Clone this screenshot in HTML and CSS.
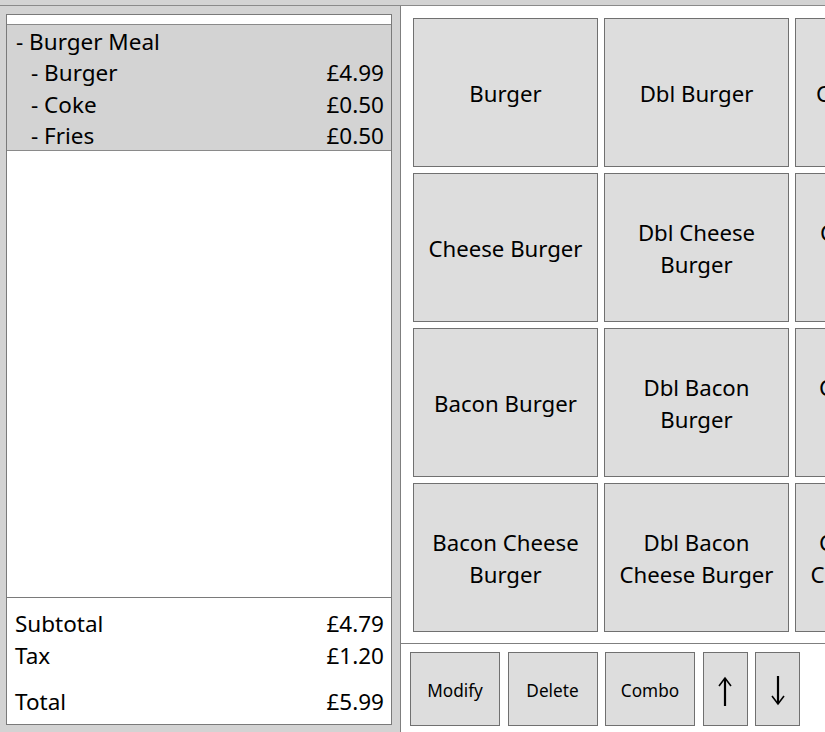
FILE: index.html
```html
<!DOCTYPE html>
<html>
<head>
<meta charset="utf-8">
<link rel="stylesheet" href="styles.css">
</head>
<body>
<div class="topbar"></div>
<div class="main">
  <div class="left">
    <div class="order">
      <div class="items">
        <div class="header-strip"></div>
        <div class="group">
          <div class="row"><span class="name">- Burger Meal</span></div>
          <div class="row sub"><span class="name">- Burger</span><span class="price">£4.99</span></div>
          <div class="row sub"><span class="name">- Coke</span><span class="price">£0.50</span></div>
          <div class="row sub"><span class="name">- Fries</span><span class="price">£0.50</span></div>
        </div>
      </div>
      <div class="totals">
        <div class="trow"><span>Subtotal</span><span>£4.79</span></div>
        <div class="trow"><span>Tax</span><span>£1.20</span></div>
        <div class="trow total"><span>Total</span><span>£5.99</span></div>
      </div>
    </div>
  </div>
  <div class="vsep"></div>
  <div class="right">
    <div class="menu">
      <div class="grid">
        <button class="item">Burger</button>
        <button class="item">Dbl Burger</button>
        <button class="item">Chicken Wrap</button>
        <button class="item">Cheese Burger</button>
        <button class="item">Dbl Cheese<br>Burger</button>
        <button class="item">Chicken Club<br>Burger</button>
        <button class="item">Bacon Burger</button>
        <button class="item">Dbl Bacon<br>Burger</button>
        <button class="item">Chicken Fillet<br>Burger</button>
        <button class="item">Bacon Cheese<br>Burger</button>
        <button class="item">Dbl Bacon<br>Cheese Burger</button>
        <button class="item">Chicken Fillet<br>Cheese Burger</button>
      </div>
    </div>
    <div class="actions">
      <button class="act">Modify</button>
      <button class="act">Delete</button>
      <button class="act">Combo</button>
      <button class="act arrow" aria-label="Move up">
        <svg width="16" height="32" viewBox="0 0 16 32"><path d="M8 3.5V31" stroke="#000" stroke-width="2.2" fill="none"/><path d="M2 11L8 3L14 11" stroke="#000" stroke-width="1.6" fill="none"/></svg>
      </button>
      <button class="act arrow" aria-label="Move down">
        <svg width="16" height="32" viewBox="0 0 16 32"><path d="M8 1V28.5" stroke="#000" stroke-width="2.2" fill="none"/><path d="M2 21L8 29L14 21" stroke="#000" stroke-width="1.6" fill="none"/></svg>
      </button>
    </div>
  </div>
</div>
</body>
</html>
```
FILE: styles.css
```css
* { box-sizing: border-box; }
html, body {
  margin: 0;
  padding: 0;
}
body {
  width: 825px;
  height: 732px;
  overflow: hidden;
  background: #d3d3d3;
  font-family: "Noto Sans", "Open Sans", sans-serif;
  color: #000;
}
.topbar {
  height: 6px;
  border-bottom: 1px solid #8a8a8a;
}
.main {
  display: flex;
  height: 726px;
}
.left {
  width: 400px;
  flex: none;
  padding: 8px 8px 7px 6px;
}
.order {
  width: 386px;
  height: 711px;
  border: 1px solid #7a7a7a;
  background: #fff;
  display: flex;
  flex-direction: column;
}
.items {
  flex: 1;
  border-bottom: 1px solid #7a7a7a;
}
.header-strip {
  height: 9px;
}
.group {
  background: #d3d3d3;
  border-top: 1px solid #8a8a8a;
  border-bottom: 1px solid #8a8a8a;
}
.row {
  display: flex;
  justify-content: space-between;
  height: 31.25px;
  line-height: 33px;
  font-size: 22.5px;
  padding: 0 7px 0 9px;
}
.row.sub {
  padding-left: 24px;
}
.totals {
  height: 126px;
  padding: 10px 7px 0 8px;
}
.trow {
  display: flex;
  justify-content: space-between;
  height: 32px;
  line-height: 32px;
  font-size: 22.5px;
}
.trow.total {
  margin-top: 14px;
}
.vsep {
  width: 1px;
  flex: none;
  background: #7f7f7f;
}
.right {
  flex: 1;
  background: #fff;
  display: flex;
  flex-direction: column;
  overflow: hidden;
}
.menu {
  height: 638px;
  padding: 12px 0 0 12px;
  border-bottom: 1px solid #7f7f7f;
  overflow: hidden;
}
.grid {
  display: grid;
  grid-template-columns: repeat(3, 185px);
  grid-auto-rows: 149px;
  gap: 6px;
}
button {
  font-family: inherit;
  color: #000;
  background: #dddddd;
  border: 1px solid #707070;
  margin: 0;
  padding: 0;
  border-radius: 0;
}
.item {
  width: 185px;
  height: 149px;
  font-size: 22.2px;
  line-height: 32px;
  text-align: center;
  padding-top: 2px;
}
.actions {
  display: flex;
  padding: 8px 0 0 9px;
  gap: 7.5px;
}
.act {
  width: 90px;
  height: 74px;
  font-size: 17.2px;
  padding-top: 2px;
}
.act.arrow {
  width: 45px;
  display: flex;
  align-items: center;
  justify-content: center;
  padding-top: 4px;
}
```
